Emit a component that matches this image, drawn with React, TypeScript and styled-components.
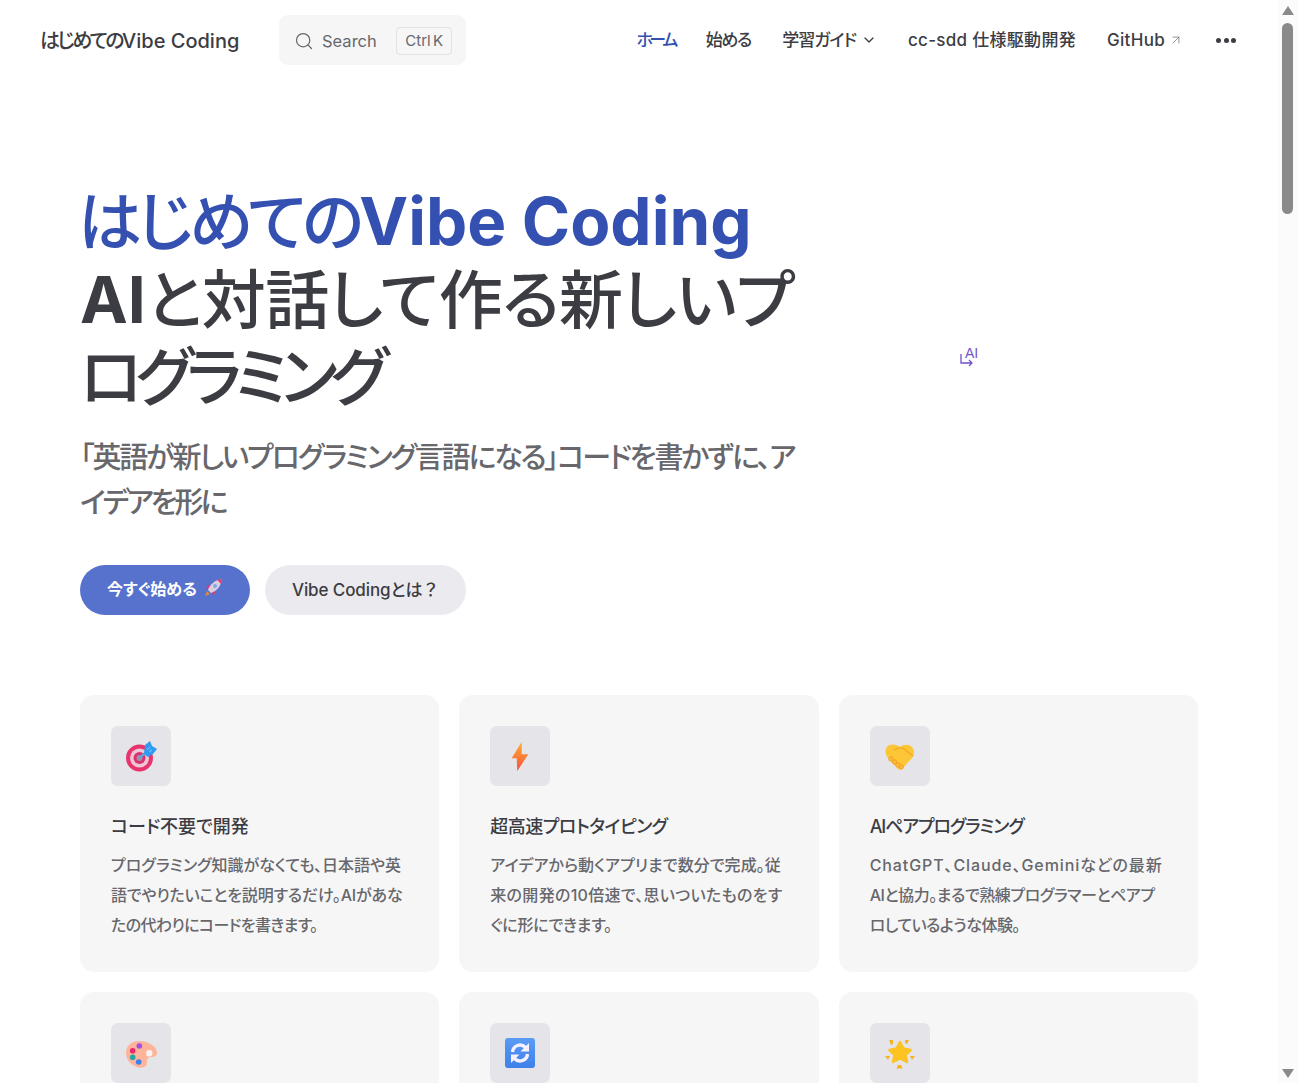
import { ReactNode } from "react";
import styled, { createGlobalStyle } from "styled-components";
import { ChevronDown, ArrowUpRight, Search as SearchIcon } from "lucide-react";

const GlobalStyle = createGlobalStyle`
  html, body {
    margin: 0;
    padding: 0;
    height: 1083px;
    overflow: hidden;
    background: #fff;
  }
  body {
    font-family: Inter, "Noto Sans CJK JP", sans-serif;
    font-feature-settings: "palt";
    color: #3c3c43;
  }
  * { box-sizing: border-box; }
`;

const Page = styled.div`
  display: flex;
  width: 1298px;
  height: 1083px;
  overflow: hidden;
`;

const Content = styled.div`
  width: 1278px;
  flex: none;
  overflow: hidden;
`;

const Scrollbar = styled.div`
  width: 20px;
  flex: none;
  background: #fbfbfb;
  display: flex;
  flex-direction: column;
  align-items: center;
  padding: 6px 1px 5px 0;
`;

const ScrollArrow = styled.div<{ $down?: boolean }>`
  width: 0;
  height: 0;
  border-left: 6px solid transparent;
  border-right: 6px solid transparent;
  ${(p) => (p.$down ? "border-top: 9px solid #8a8a8a;" : "border-bottom: 9px solid #8a8a8a;")}
  ${(p) => (p.$down ? "margin-top: auto;" : "")}
`;

const ScrollThumb = styled.div`
  width: 11px;
  height: 191px;
  margin-top: 8px;
  border-radius: 6px;
  background: #8a8a8a;
`;

const Nav = styled.header`
  height: 80px;
  display: flex;
  align-items: center;
  padding: 0 42px 0 40px;
`;

// tightens the kana runs, which set narrower in the original font
const Track = styled.span<{ $by: number }>`
  letter-spacing: ${(p) => p.$by}px;
`;

const SiteTitle = styled.div`
  font-size: 20px;
  line-height: 28px;
  padding-top: 1px;
  font-weight: 500;
  color: #3c3c43;
  width: 239px;
  flex: none;
  white-space: nowrap;
`;

const SearchBox = styled.div`
  width: 187px;
  height: 50px;
  border-radius: 9px;
  background: #f6f6f7;
  display: flex;
  align-items: center;
  padding: 1px 14px 0 15px;
  color: #67676c;
  font-size: 16.5px;
  flex: none;
`;

const SearchLabel = styled.span`
  margin-left: 8px;
  flex: 1;
`;

const Kbd = styled.span`
  height: 28px;
  padding: 0 8px;
  display: flex;
  align-items: center;
  border: 1px solid #e2e2e3;
  border-radius: 4px;
  font-size: 15px;
  word-spacing: -2px;
  color: #67676c;
`;

const NavLinks = styled.nav`
  margin-left: auto;
  display: flex;
  align-items: center;
  gap: 31px;
  font-size: 17px;
  line-height: 24px;
  font-weight: 500;
  white-space: nowrap;
`;

const NavLink = styled.a<{ $active?: boolean; $track?: number }>`
  display: flex;
  align-items: center;
  letter-spacing: ${(p) => p.$track ?? 0}px;
  color: ${(p) => (p.$active ? "#3451b2" : "#3c3c43")};
`;

const More = styled.span`
  display: flex;
  gap: 2.5px;
  margin-left: 2px;
`;

const Dot = styled.i`
  width: 5px;
  height: 5px;
  border-radius: 50%;
  background: #3c3c43;
`;

const Hero = styled.section`
  display: flex;
  padding: 103px 80px 0;
`;

const HeroMain = styled.div`
  width: 720px;
  flex: none;
`;

const HeroAside = styled.div`
  flex: 1;
  display: flex;
  align-items: flex-start;
  padding: 163px 0 0 160px;
`;

const HeroTitle = styled.h1`
  margin: 0;
  font-size: 64px;
  line-height: 77.5px;
  font-weight: 700;
  color: #3c3c43;
`;

const HeroName = styled.span`
  display: block;
  color: #3451b2;
  font-size: 65.5px;
  margin-left: -2px;
`;

const HeroKana = styled.span<{ $by: number; $size?: number }>`
  font-weight: 500;
  font-size: ${(p) => p.$size ?? 64}px;
  letter-spacing: ${(p) => p.$by}px;
`;

const Tagline = styled.p`
  margin: 19px 0 0;
  font-size: 29px;
  line-height: 45px;
  font-weight: 500;
  letter-spacing: -2.1px;
  color: #67676c;
`;

const Actions = styled.div`
  display: flex;
  gap: 15px;
  margin-top: 40px;
`;

const Button = styled.a<{ $brand?: boolean }>`
  height: 50px;
  padding: 0 27px 3px;
  border-radius: 25px;
  display: flex;
  align-items: center;
  gap: 6px;
  font-size: 16px;
  font-weight: ${(p) => (p.$brand ? 600 : 500)};
  background: ${(p) => (p.$brand ? "#5672cd" : "#ebebef")};
  color: ${(p) => (p.$brand ? "#fff" : "#3c3c43")};
  white-space: nowrap;
`;

const AltLabel = styled.span`
  font-size: 17px;
  letter-spacing: -0.1px;
`;

const FullWidth = styled.span`
  font-feature-settings: normal;
`;

const Features = styled.section`
  display: grid;
  grid-template-columns: repeat(3, 1fr);
  gap: 20px;
  padding: 80px 80px 0;
`;

const Card = styled.article`
  background: #f6f6f7;
  border-radius: 14px;
  padding: 31px;
  height: 277px;
`;

const IconBox = styled.div`
  width: 60px;
  height: 60px;
  border-radius: 7px;
  background: #e4e4e9;
  display: flex;
  align-items: center;
  justify-content: center;
`;

const CardTitle = styled.h2<{ $track: number }>`
  margin: 28px 0 0;
  font-size: 18px;
  line-height: 26px;
  font-weight: 500;
  letter-spacing: ${(p) => p.$track}px;
  color: #3c3c43;
`;

const CardText = styled.p`
  margin: 10px 0 0;
  font-size: 16px;
  line-height: 30px;
  font-weight: 500;
  color: #67676c;
`;

const CardLine = styled.span<{ $track: number }>`
  display: block;
  white-space: nowrap;
  letter-spacing: ${(p) => p.$track}px;
`;

const Target = () => (
  <svg width="32" height="32" viewBox="0 0 32 32">
    <circle cx="14.500" cy="18" r="13.500" fill="#e8336d" />
    <circle cx="14.500" cy="18" r="9.500" fill="#efc6d6" />
    <circle cx="14.500" cy="18" r="6" fill="#d8336c" />
    <circle cx="14.500" cy="18" r="3" fill="#a58fa8" />
    <path d="M14.500 18 24 9" stroke="#5aa7e8" strokeWidth="2.400" />
    <path d="M19 14 20 5l5-4 2 5 5 3-4 5-5 3z" fill="#2f9bf0" />
    <path d="M22 10 25 7M24 12l3-2" stroke="#8cc8f5" strokeWidth="1" />
  </svg>
);

const Bolt = () => (
  <svg width="32" height="32" viewBox="0 0 32 32">
    <defs>
      <linearGradient id="bolt" x1="0" y1="0" x2="0" y2="1">
        <stop offset="0" stopColor="#ffb02e" />
        <stop offset="1" stopColor="#f8503f" />
      </linearGradient>
    </defs>
    <path d="M17.700 1.700 7.700 18.300h5l.6 12.700 11-16.700h-6.600z" fill="url(#bolt)" />
  </svg>
);

const Handshake = () => (
  <svg width="32" height="32" viewBox="0 0 32 32">
    <path
      d="M16 7c3-3 9-3 12 0 3 3 2.500 8 0 11L18 29c-1 1-3 1-4 0L4 18C1 14 1 10 3 7c3-3.500 9-3 13 0z"
      fill="#fdc636"
    />
    <path d="M10 10c3-2 7-3 10-1l9 7" fill="none" stroke="#f0a826" strokeWidth="1.200" />
    <circle cx="7" cy="19" r="2.200" fill="#fdbb38" stroke="#ee9a22" strokeWidth=".8" />
    <circle cx="10.500" cy="22" r="2.200" fill="#fdbb38" stroke="#ee9a22" strokeWidth=".8" />
    <circle cx="14" cy="25" r="2.200" fill="#fdbb38" stroke="#ee9a22" strokeWidth=".8" />
    <circle cx="17.500" cy="27" r="2" fill="#fdbb38" stroke="#ee9a22" strokeWidth=".8" />
  </svg>
);

const Palette = () => (
  <svg width="32" height="32" viewBox="0 0 32 32">
    <path
      d="M14 4c8 0 17 4 18 11 .4 4-3 5-6 5-3 0-4 2-4 4 0 3 0 5-3 6-3 1-6 1-9-1C5 27 1 22 1 16 1 9 6 4 14 4z"
      fill="#fdb49a"
    />
    <circle cx="24.300" cy="16.300" r="3.200" fill="#f7f2ee" />
    <circle cx="14.300" cy="9" r="2.800" fill="#a44ee0" />
    <circle cx="7.700" cy="13.700" r="2.800" fill="#e8276e" />
    <circle cx="7.700" cy="20.300" r="2.800" fill="#1fa8a0" />
    <circle cx="13.700" cy="25" r="2.800" fill="#3b82f0" />
  </svg>
);

const Repeat = () => (
  <svg width="30" height="30" viewBox="0 0 30 30">
    <defs>
      <linearGradient id="repeat" x1="0" y1="0" x2="0" y2="1">
        <stop offset="0" stopColor="#5a9cf5" />
        <stop offset="1" stopColor="#3f80ea" />
      </linearGradient>
    </defs>
    <rect width="30" height="30" rx="3" fill="url(#repeat)" />
    <path d="M7.500 14a7.500 7.500 0 0 1 13-4.500" fill="none" stroke="#f6f0ff" strokeWidth="3.400" />
    <path d="M24 5v8.500h-8.500z" fill="#f6f0ff" />
    <path d="M22.500 16a7.500 7.500 0 0 1-13 4.500" fill="none" stroke="#f6f0ff" strokeWidth="3.400" />
    <path d="M6 25v-8.500h8.500z" fill="#f6f0ff" />
  </svg>
);

const Star = () => (
  <svg width="32" height="32" viewBox="0 0 32 32">
    <path
      d="M16 5l3.500 6.500 7 1.500-5 5 1.500 7-7-3.500L9 25l1.500-7-5-5 7-1.500z"
      fill="#fcc322"
      stroke="#fcc322"
      strokeWidth="2.500"
      strokeLinejoin="round"
    />
    <path
      d="M5 3h4v4L7 8zM21 3h4l-2 4-2-1zM1 19h5l-2 4zM26 19h5l-3 4zM14 28h3l1.500 3.500h-6z"
      fill="#f5b324"
    />
  </svg>
);

const Rocket = () => (
  <svg width="20" height="20" viewBox="0 0 20 20">
    <path d="M4 13 2 18l5-2z" fill="#e8863a" />
    <path d="M5 11 3 10l3-3 2 0zM9 15l1 2 3-3 0-2z" fill="#e8336d" />
    <path d="M5 12C7 6 12 2 19 1c-1 7-5 12-11 14z" fill="#d9cfe0" />
    <path d="M14 1.800 19 1l-.8 5z" fill="#e8336d" />
    <circle cx="12" cy="8" r="2" fill="#7fa8e8" />
  </svg>
);

const TranslateIcon = styled.svg`
  display: block;
`;

const TranslateLabel = styled.text`
  font-family: "Liberation Sans", sans-serif;
  font-size: 14px;
  fill: #7152c9;
`;

type Line = { text: string; track: number };
type Feature = { icon: ReactNode; title?: string; track?: number; lines?: Line[] };

const features: Feature[] = [
  {
    icon: <Target />,
    title: "コード不要で開発",
    track: 0,
    lines: [
      { text: "プログラミング知識がなくても、日本語や英", track: 0 },
      { text: "語でやりたいことを説明するだけ。AIがあな", track: -0.15 },
      { text: "たの代わりにコードを書きます。", track: -0.6 },
    ],
  },
  {
    icon: <Bolt />,
    title: "超高速プロトタイピング",
    track: -0.5,
    lines: [
      { text: "アイデアから動くアプリまで数分で完成。従", track: 0.05 },
      { text: "来の開発の10倍速で、思いついたものをす", track: 0.3 },
      { text: "ぐに形にできます。", track: -0.2 },
    ],
  },
  {
    icon: <Handshake />,
    title: "AIペアプログラミング",
    track: -1.1,
    lines: [
      { text: "ChatGPT、Claude、Geminiなどの最新", track: 0.9 },
      { text: "AIと協力。まるで熟練プログラマーとペアプ", track: -0.45 },
      { text: "ロしているような体験。", track: -0.5 },
    ],
  },
  { icon: <Palette /> },
  { icon: <Repeat /> },
  { icon: <Star /> },
];

export default function App() {
  return (
    <>
      <GlobalStyle />
      <Page>
        <Content>
          <Nav>
            <SiteTitle>
              <Track $by={-2.6}>はじめての</Track>Vibe Coding
            </SiteTitle>
            <SearchBox>
              <SearchIcon size={20} strokeWidth={1.5} />
              <SearchLabel>Search</SearchLabel>
              <Kbd>Ctrl K</Kbd>
            </SearchBox>
            <NavLinks>
              <NavLink $active $track={-3.5}>ホーム</NavLink>
              <NavLink $track={-1.2}>始める</NavLink>
              <NavLink $track={-1}>
                学習ガイド
                <ChevronDown size={16} strokeWidth={2} style={{ marginLeft: 5 }} />
              </NavLink>
              <NavLink $track={0.3}>cc-sdd 仕様駆動開発</NavLink>
              <NavLink $track={0.3}>
                GitHub
                <ArrowUpRight size={14} strokeWidth={1.2} color="#67676c" style={{ marginLeft: 4 }} />
              </NavLink>
              <More>
                <Dot />
                <Dot />
                <Dot />
              </More>
            </NavLinks>
          </Nav>
          <Hero>
            <HeroMain>
              <HeroTitle>
                <HeroName>
                  <HeroKana $by={-4.6}>はじめての</HeroKana>Vibe Coding
                </HeroName>
                AI
                <HeroKana $by={-0.5}>と対話して作る新しいプ</HeroKana>
                <HeroKana $by={-7}>ログラミング</HeroKana>
              </HeroTitle>
              <Tagline>
                「英語が新しいプログラミング言語になる」コードを書かずに、ア
                <Track $by={-3}>イデアを形に</Track>
              </Tagline>
              <Actions>
                <Button $brand>
                  今すぐ始める
                  <Rocket />
                </Button>
                <Button>
                  <AltLabel>
                    Vibe Codingとは<FullWidth>？</FullWidth>
                  </AltLabel>
                </Button>
              </Actions>
            </HeroMain>
            <HeroAside>
              <TranslateIcon width="20" height="22" viewBox="0 0 20 22">
                <TranslateLabel x="5" y="12">AI</TranslateLabel>
                <path d="M1 8v9h11M9 14l3 3-3 3" fill="none" stroke="#7152c9" strokeWidth="1.300" />
              </TranslateIcon>
            </HeroAside>
          </Hero>
          <Features>
            {features.map((f, i) => (
              <Card key={i}>
                <IconBox>{f.icon}</IconBox>
                {f.title && <CardTitle $track={f.track ?? 0}>{f.title}</CardTitle>}
                {f.lines && (
                  <CardText>
                    {f.lines.map((line) => (
                      <CardLine key={line.text} $track={line.track}>
                        {line.text}
                      </CardLine>
                    ))}
                  </CardText>
                )}
              </Card>
            ))}
          </Features>
        </Content>
        <Scrollbar>
          <ScrollArrow />
          <ScrollThumb />
          <ScrollArrow $down />
        </Scrollbar>
      </Page>
    </>
  );
}
